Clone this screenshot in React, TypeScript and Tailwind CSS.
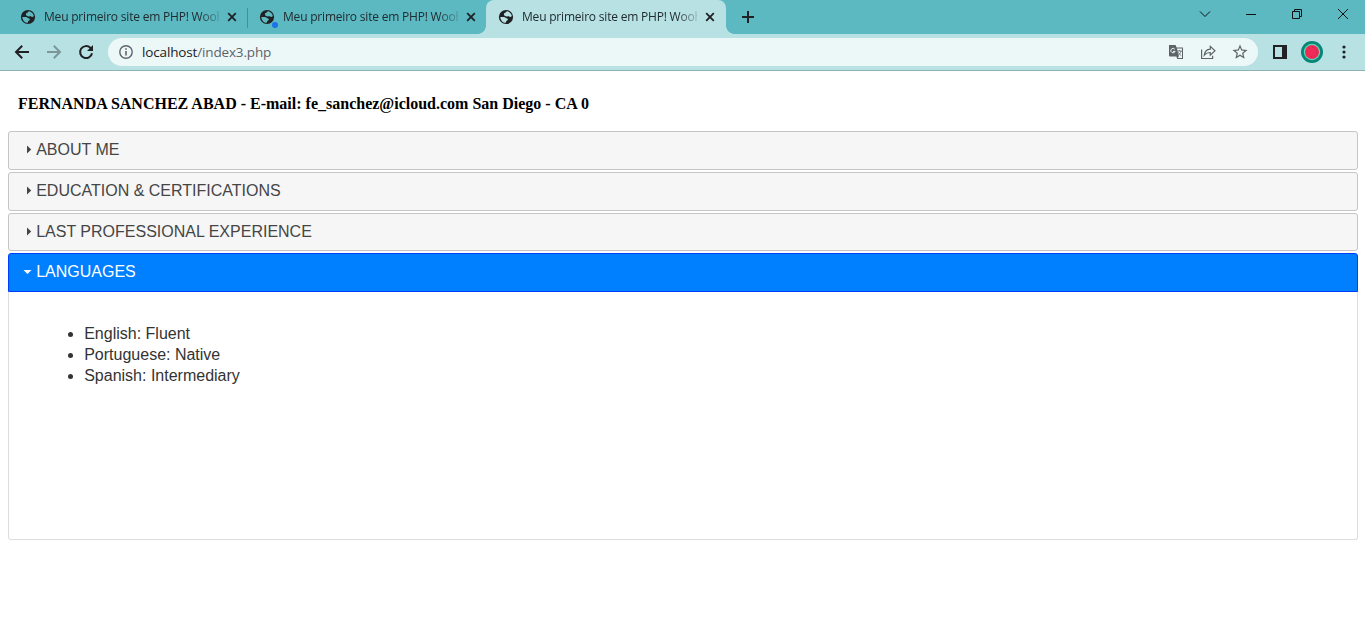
import React from "react";

const uiFont = "font-['Open_Sans','Noto_Sans',sans-serif]";

function Globe() {
  return (
    <svg className="block size-4 shrink-0" viewBox="0 0 16 16">
      <circle cx="8" cy="8" r="7.1" fill="#202124" />
      <path
        className="fill-current"
        d="M2.3 7.9 6 8C7.4 8.1 7.7 9.2 8.9 9.4 10 9.6 10.1 10.4 9.6 11.1 9.2 11.8 8.2 11.7 8.1 12.4L7.8 13.8C4.9 13.7 2.4 11.3 2.3 7.9ZM7.2 3.8C8 3.4 8 2.6 9.3 2.2 11.6 2.8 13.4 4.6 13.8 7 13.1 8 12 8.2 11.2 7.6 10.5 7 10 7.5 8.9 7.4 7.3 7.3 5.9 6.8 5.9 5.6 5.9 4.6 6.4 4 7.2 3.8Z"
      />
    </svg>
  );
}

function CloseIcon() {
  return (
    <svg className="size-[10px] shrink-0" viewBox="0 0 10 10" fill="none" stroke="#202124" strokeWidth="1.8">
      <path d="M1.2 1.2 8.8 8.8M8.8 1.2 1.2 8.8" />
    </svg>
  );
}

function TabContent({ busy, active }: { busy?: boolean; active?: boolean }) {
  return (
    <>
      <span className={active ? "relative text-[#b8e1e4]" : "relative text-[#5eb9c1]"}>
        <Globe />
        {busy && <span className="absolute left-[13px] top-[13px] size-1.5 rounded-full bg-[#1a73e8]" />}
      </span>
      <span className="ml-2 w-[175px] whitespace-nowrap text-[12px] leading-4 tracking-[-0.2px] text-[#202c30] [mask-image:linear-gradient(to_right,black_155px,transparent_180px)]">
        Meu primeiro site em PHP! Wooh
      </span>
      <span className="ml-2">
        <CloseIcon />
      </span>
    </>
  );
}

function TabStrip() {
  return (
    <div className="flex h-[34px] bg-[#5cb8c1]">
      <div className="flex w-[247px] items-center pl-5">
        <TabContent />
      </div>
      <div className="mt-2 h-5 w-px bg-[#41919a]" />
      <div className="flex w-[238px] items-center pl-[11px]">
        <TabContent busy />
      </div>
      <div className="relative flex w-60 items-center rounded-t-lg bg-[#b8e1e4] pl-3">
        <span className="absolute -left-2 bottom-0 size-2 bg-[radial-gradient(circle_at_0_0,transparent_7.5px,#b8e1e4_8px)]" />
        <TabContent active />
        <span className="absolute -right-2 bottom-0 size-2 bg-[radial-gradient(circle_at_100%_0,transparent_7.5px,#b8e1e4_8px)]" />
      </div>
      <svg className="ml-4 mt-[11px] size-3" viewBox="0 0 12 12" stroke="#202124" strokeWidth="2">
        <path d="M6 0v12M0 6h12" />
      </svg>
      <div className="ml-auto flex h-7 items-center gap-[34px] pr-[16px]">
        <svg className="size-3" viewBox="0 0 12 12" fill="none" stroke="#111">
          <path d="M1 3.5 6 8.5 11 3.5" />
        </svg>
        <svg className="size-3" viewBox="0 0 12 12" stroke="#111">
          <path d="M1 6.5h10" />
        </svg>
        <svg className="size-3" viewBox="0 0 12 12" fill="none" stroke="#111">
          <path d="M1.5 3.5h7v7h-7zM3.5 3.5v-2h7v7h-2" />
        </svg>
        <svg className="size-3" viewBox="0 0 12 12" fill="none" stroke="#111">
          <path d="M1 1 11 11M11 1 1 11" />
        </svg>
      </div>
    </div>
  );
}

function Toolbar() {
  return (
    <div className="flex h-[37px] items-center border-b border-[#8eb1b4] bg-[#b8e1e4] pl-[14px]">
      <svg className="size-4" viewBox="0 0 16 16" fill="none" stroke="#202124" strokeWidth="2">
        <path d="M15 8H2.5M8.2 1.7 2 8l6.2 6.3" />
      </svg>
      <svg className="ml-4 size-4" viewBox="0 0 16 16" fill="none" stroke="#7b979a" strokeWidth="2">
        <path d="M1 8h12.5M7.8 1.7 14 8l-6.2 6.3" />
      </svg>
      <svg className="ml-4 size-4" viewBox="0 0 16 16" fill="none" stroke="#202124" strokeWidth="2">
        <path d="M14 9.2A6 6 0 1 1 12.3 3.8L14 5.5" />
        <path d="M15 1v6H9z" fill="#202124" stroke="none" />
      </svg>
      <div className="ml-[14px] flex h-7 w-[1150px] items-center rounded-full bg-[#ecf8f8] pl-[11px] pr-[9px]">
        <svg className="size-[14px]" viewBox="0 0 14 14" fill="none" stroke="#5f6368" strokeWidth="1.4">
          <circle cx="7" cy="7" r="6.2" />
          <path d="M7 6v4.5M7 3.2v1.6" strokeWidth="1.6" />
        </svg>
        <span className="ml-[9px] text-[13.5px] leading-5 tracking-[-0.15px] text-[#5f6368]">
          <span className="text-[#202124]">localhost</span>/index3.php
        </span>
        <svg className="ml-auto size-4" viewBox="0 0 16 16">
          <path d="M1 1h6.6l1 2.6H15V15H9.3L8.3 12.4H2a1 1 0 0 1-1-1z" fill="#5f6368" />
          <path d="M9 4.6h5v9.4H9.8l1-1.6z" fill="#ecf8f8" />
          <path d="M6.8 5.3A2.2 2.2 0 1 0 7.1 7.4H5" fill="none" stroke="#ecf8f8" />
          <path d="M9 7h5M11.5 6v1M13 7c-.4 2-1.5 3.4-3 4.3M10.3 8.3c.7 1.5 1.6 2.4 3 3.3" fill="none" stroke="#5f6368" strokeWidth=".8" />
        </svg>
        <svg className="ml-4 size-4" viewBox="0 0 16 16" fill="none" stroke="#5f6368" strokeWidth="1.2">
          <path d="M1.6 5.5v9h11v-2.8M4.3 11.2C4.8 7.4 7 5.4 10.3 5.2V2.3L15 6.8l-4.7 4.4V8.5C7.8 8.4 6 9.2 4.3 11.2z" />
        </svg>
        <svg className="ml-[15px] size-[18px]" viewBox="0 0 24 24" fill="#5f6368">
          <path d="M22 9.24l-7.19-.62L12 2 9.19 8.63 2 9.24l5.46 4.73L5.82 21 12 17.27 18.18 21l-1.63-7.03L22 9.24zM12 15.4l-3.76 2.27 1-4.28-3.32-2.88 4.38-.38L12 6.1l1.71 4.04 4.38.38-3.32 2.88 1 4.28L12 15.4z" />
        </svg>
      </div>
      <svg className="ml-[15px] h-[14px] w-[14px]" viewBox="0 0 14 14">
        <path d="M0 0h14v14H0zM2 2v10h7V2z" fill="#202124" fillRule="evenodd" />
      </svg>
      <svg className="ml-[14px] size-[22px]" viewBox="0 0 22 22">
        <circle cx="11" cy="11" r="11" fill="#068677" />
        <circle cx="11" cy="11" r="8.2" fill="#5ed6b2" />
        <circle cx="11" cy="11" r="7" fill="#f12b58" />
        <circle cx="11" cy="11" r="4.6" fill="none" stroke="#a72852" strokeWidth="1" strokeDasharray="1 2.6" />
      </svg>
      <svg className="ml-[19.4px] h-[14px] w-1" viewBox="0 0 4 14" fill="#202124">
        <circle cx="2" cy="2" r="1.6" />
        <circle cx="2" cy="7" r="1.6" />
        <circle cx="2" cy="12" r="1.6" />
      </svg>
    </div>
  );
}

function Section({ title, size, open }: { title: string; size: string; open?: boolean }) {
  return (
    <div
      className={`flex border pl-[11px] text-[16px] ${size} ${
        open
          ? "rounded-t-[3px] border-[#003eff] bg-[#007fff] text-white"
          : "rounded-[3px] border-[#c5c5c5] bg-[#f6f6f6] text-[#454545]"
      }`}
    >
      <svg className="mt-[10px] size-4" viewBox="0 0 16 16" fill="currentColor">
        {open ? <path d="M3.5 6h8L7.5 10z" /> : <path d="M7 3.5v8L11.2 7.5z" />}
      </svg>
      <span className="ml-[0.2px] mt-2 leading-[20px]">{title}</span>
    </div>
  );
}

export default function App() {
  return (
    <div className="h-[626px] w-[1365px] overflow-hidden bg-white">
      <header className={uiFont}>
        <TabStrip />
        <Toolbar />
      </header>
      <main className="px-2 pr-[7px] font-['Liberation_Sans',Arial,sans-serif]">
        <h1 className="flex h-[60px] items-start pl-[10px] pt-[23px] font-['Liberation_Serif','Times_New_Roman',serif] text-[16px] font-bold leading-5 text-black">
          FERNANDA SANCHEZ ABAD - E-mail: fe_sanchez@icloud.com San Diego - CA 0
        </h1>
        <Section title="ABOUT ME" size="h-[39px]" />
        <div className="h-0.5" />
        <Section title="EDUCATION &amp; CERTIFICATIONS" size="h-[39px]" />
        <div className="h-0.5" />
        <Section title="LAST PROFESSIONAL EXPERIENCE" size="h-[38px]" />
        <div className="h-0.5" />
        <Section title="LANGUAGES" size="h-[39px]" open />
        <div className="h-[248px] rounded-b-[3px] border border-t-0 border-[#dddddd] pt-[31px] text-[16px] leading-[21px] text-[#333333]">
          <ul className="list-disc pl-[75.2px]">
            <li>English: Fluent</li>
            <li>Portuguese: Native</li>
            <li>Spanish: Intermediary</li>
          </ul>
        </div>
      </main>
    </div>
  );
}
